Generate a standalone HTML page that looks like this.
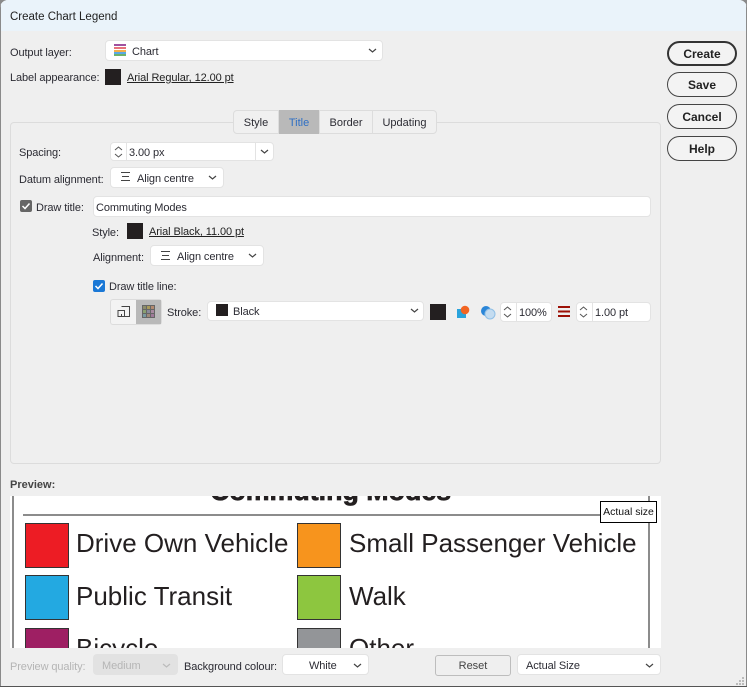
<!DOCTYPE html>
<html><head><meta charset="utf-8"><style>
html,body{margin:0;padding:0;background:#8a8a8a}
#w{position:relative;width:747px;height:687px;overflow:hidden;background:#efefef;font:11px "Liberation Sans",sans-serif;color:#2b2b33;border-radius:8px 8px 0 0}
#w *{box-sizing:border-box}
.a{position:absolute;white-space:nowrap}
.l{position:absolute;white-space:nowrap;line-height:14px;margin-top:1px;letter-spacing:-.1px}
.f{position:absolute;background:#fff;border:1px solid #e3e3e3;border-radius:4px;white-space:nowrap}
.sw{position:absolute;width:16px;height:16px;background:#231f20}
.u{position:absolute;text-decoration:underline;color:#222;white-space:nowrap;line-height:14px;margin-top:1px;letter-spacing:-.1px}
.btn{position:absolute;left:667px;width:70px;height:25px;border:1px solid #444;border-radius:13px;text-align:center;font-weight:bold;font-size:12px;line-height:24px;color:#222;background:#f3f3f3}
.k{position:absolute;width:44px;height:45px;border:1px solid #333}
.t{position:absolute;font-size:26px;line-height:30px;color:#231f20;white-space:nowrap}
svg{position:absolute;overflow:visible}
.tab{position:absolute;top:110px;height:24px;text-align:center;line-height:26px;border-right:1px solid #ddd}
</style></head><body><div id="w">
<div class="a" style="left:0;top:0;width:747px;height:31px;background:#eaf3fa"></div>
<div class="a" style="left:0;top:0;width:1px;height:687px;background:#8a8a8a"></div>
<div class="a" style="left:746px;top:0;width:1px;height:687px;background:#8a8a8a"></div>
<div class="a" style="left:0;top:686px;width:747px;height:1px;background:#555"></div>
<div class="l" style="left:10px;top:9px;font-size:11.5px;color:#222;letter-spacing:0">Create Chart Legend</div>

<div class="l" style="left:10px;top:45px">Output layer:</div>
<div class="f" style="left:105px;top:40px;width:278px;height:21px"></div>
<svg style="left:114px;top:44px" width="12" height="12"><rect x="0" y="0" width="12" height="2" fill="#a0519f"/><rect x="0" y="3" width="12" height="2" fill="#e8737a"/><rect x="0" y="6" width="12" height="2" fill="#f5b04a"/><rect x="0" y="8" width="12" height="2" fill="#5aa9e6"/><rect x="0" y="10" width="12" height="2" fill="#6db36d"/></svg>
<div class="l" style="left:132px;top:44px">Chart</div>
<svg style="left:368px;top:48px" width="9" height="5"><path d="M1 1L4.5 4L8 1" fill="none" stroke="#444" stroke-width="1.2"/></svg>

<div class="l" style="left:10px;top:70px">Label appearance:</div>
<div class="sw" style="left:105px;top:69px"></div>
<div class="u" style="left:127px;top:70px">Arial Regular, 12.00 pt</div>

<div class="a" style="left:10px;top:122px;width:651px;height:342px;border:1px solid #dcdcdc;border-radius:4px"></div>
<div class="a" style="left:233px;top:110px;width:204px;height:24px;background:#f0f0f0;border:1px solid #dcdcdc;border-radius:4px"></div>
<div class="tab" style="left:234px;width:45px">Style</div>
<div class="tab" style="left:279px;width:41px;background:#b9b9b9;color:#2f6fc4">Title</div>
<div class="tab" style="left:320px;width:53px">Border</div>
<div class="tab" style="left:373px;width:63px;border:0">Updating</div>

<div class="l" style="left:19px;top:145px">Spacing:</div>
<div class="f" style="left:110px;top:142px;width:164px;height:19px"></div>
<div class="a" style="left:126px;top:142px;width:1px;height:19px;background:#e3e3e3"></div>
<div class="a" style="left:255px;top:142px;width:1px;height:19px;background:#e3e3e3"></div>
<svg style="left:114px;top:146px" width="9" height="12"><path d="M1 4L4.5 1L8 4M1 8L4.5 11L8 8" fill="none" stroke="#555"/></svg>
<div class="l" style="left:129px;top:145px">3.00 px</div>
<svg style="left:260px;top:149px" width="9" height="5"><path d="M1 1L4.5 4L8 1" fill="none" stroke="#444" stroke-width="1.2"/></svg>

<div class="l" style="left:19px;top:172px">Datum alignment:</div>
<div class="f" style="left:110px;top:167px;width:114px;height:21px"></div>
<svg style="left:120px;top:172px" width="11" height="10"><path d="M1 .5H10M2 4.5H9M1 8.5H10" stroke="#444" fill="none"/></svg>
<div class="l" style="left:137px;top:171px">Align centre</div>
<svg style="left:208px;top:175px" width="9" height="5"><path d="M1 1L4.5 4L8 1" fill="none" stroke="#444" stroke-width="1.2"/></svg>

<div class="a" style="left:20px;top:200px;width:12px;height:12px;background:#666;border-radius:2px"></div>
<svg style="left:20px;top:200px" width="12" height="12"><path d="M2.5 6L5 8.5L9.5 3.5" fill="none" stroke="#fff" stroke-width="1.5"/></svg>
<div class="l" style="left:36px;top:200px">Draw title:</div>
<div class="f" style="left:93px;top:196px;width:558px;height:21px"></div>
<div class="l" style="left:96px;top:200px">Commuting Modes</div>

<div class="l" style="left:92px;top:225px">Style:</div>
<div class="sw" style="left:127px;top:223px"></div>
<div class="u" style="left:149px;top:224px">Arial Black, 11.00 pt</div>
<div class="l" style="left:93px;top:250px">Alignment:</div>
<div class="f" style="left:150px;top:245px;width:114px;height:21px"></div>
<svg style="left:160px;top:251px" width="11" height="10"><path d="M1 .5H10M2 4.5H9M1 8.5H10" stroke="#444" fill="none"/></svg>
<div class="l" style="left:177px;top:249px">Align centre</div>
<svg style="left:248px;top:253px" width="9" height="5"><path d="M1 1L4.5 4L8 1" fill="none" stroke="#444" stroke-width="1.2"/></svg>

<div class="a" style="left:93px;top:280px;width:12px;height:12px;background:#1a78d6;border-radius:2px"></div>
<svg style="left:93px;top:280px" width="12" height="12"><path d="M2.5 6L5 8.5L9.5 3.5" fill="none" stroke="#fff" stroke-width="1.5"/></svg>
<div class="l" style="left:109px;top:279px">Draw title line:</div>

<div class="a" style="left:110px;top:299px;width:52px;height:26px;background:#f3f3f3;border:1px solid #dcdcdc;border-radius:3px"></div>
<div class="a" style="left:136px;top:300px;width:25px;height:24px;background:#b9b9b9"></div>
<svg style="left:117px;top:305px" width="14" height="14"><path d="M4.5 1.5H12.5V11.5H4.5V9M1 5.5H7.5V11.5H1Z" fill="none" stroke="#444"/></svg>
<svg style="left:142px;top:305px" width="13" height="13"><rect width="13" height="13" fill="#666"/><rect x="1" y="1" width="3" height="3" fill="#8c8c6a"/><rect x="5" y="1" width="3" height="3" fill="#a89a5a"/><rect x="9" y="1" width="3" height="3" fill="#b48a70"/><rect x="1" y="5" width="3" height="3" fill="#8aa070"/><rect x="5" y="5" width="3" height="3" fill="#8a8a9a"/><rect x="9" y="5" width="3" height="3" fill="#a88aa0"/><rect x="1" y="9" width="3" height="3" fill="#7a9aa0"/><rect x="5" y="9" width="3" height="3" fill="#a08a7a"/><rect x="9" y="9" width="3" height="3" fill="#a07a9a"/></svg>
<div class="l" style="left:167px;top:305px">Stroke:</div>
<div class="f" style="left:207px;top:301px;width:217px;height:20px"></div>
<div class="a" style="left:216px;top:304px;width:12px;height:12px;background:#231f20"></div>
<div class="l" style="left:233px;top:304px">Black</div>
<svg style="left:410px;top:308px" width="9" height="5"><path d="M1 1L4.5 4L8 1" fill="none" stroke="#444" stroke-width="1.2"/></svg>
<div class="sw" style="left:430px;top:304px"></div>
<svg style="left:456px;top:305px" width="14" height="14"><rect x="1" y="4" width="9" height="9" fill="#29a3dc"/><circle cx="9" cy="5" r="4.3" fill="#f26522"/></svg>
<svg style="left:480px;top:305px" width="16" height="16"><circle cx="6" cy="6" r="5" fill="#2a86d8"/><circle cx="10" cy="9" r="5" fill="#c4dcf0" stroke="#8fbfe6"/></svg>
<div class="f" style="left:500px;top:302px;width:52px;height:20px"></div>
<div class="a" style="left:516px;top:302px;width:1px;height:20px;background:#e3e3e3"></div>
<svg style="left:503px;top:306px" width="9" height="12"><path d="M1 4L4.5 1L8 4M1 8L4.5 11L8 8" fill="none" stroke="#555"/></svg>
<div class="l" style="left:519px;top:305px">100%</div>
<svg style="left:558px;top:306px" width="12" height="11"><path d="M0 1H12M0 5.5H12M0 10H12" stroke="#9c1006" stroke-width="2"/></svg>
<div class="f" style="left:576px;top:302px;width:75px;height:20px"></div>
<div class="a" style="left:592px;top:302px;width:1px;height:20px;background:#e3e3e3"></div>
<svg style="left:579px;top:306px" width="9" height="12"><path d="M1 4L4.5 1L8 4M1 8L4.5 11L8 8" fill="none" stroke="#555"/></svg>
<div class="l" style="left:595px;top:305px">1.00 pt</div>

<div class="btn" style="top:41px;border:2px solid #333;line-height:22px">Create</div>
<div class="btn" style="top:72px">Save</div>
<div class="btn" style="top:104px">Cancel</div>
<div class="btn" style="top:136px">Help</div>

<div class="l" style="left:10px;top:477px;font-weight:bold;color:#444;letter-spacing:0">Preview:</div>
<div class="a" style="left:10px;top:496px;width:651px;height:152px;background:#fff;overflow:hidden">
 <div class="a" style="left:2px;top:0;width:2px;height:152px;background:#8c8c8c"></div>
 <div class="a" style="left:638px;top:0;width:2px;height:152px;background:#8c8c8c"></div>
 <div class="a" style="left:13px;top:18px;width:625px;height:2px;background:#8c8c8c"></div>
 <div class="a" style="left:200px;top:-20px;width:241px;text-align:center;font-size:26.8px;line-height:30px;font-weight:bold;color:#231f20;-webkit-text-stroke:.7px #231f20">Commuting Modes</div>
 <div class="k" style="left:15px;top:27px;background:#ed1c24"></div>
 <div class="k" style="left:15px;top:79px;background:#23a9e1"></div>
 <div class="k" style="left:15px;top:132px;background:#9e1f63"></div>
 <div class="k" style="left:287px;top:27px;background:#f7941d"></div>
 <div class="k" style="left:287px;top:79px;background:#8dc63f"></div>
 <div class="k" style="left:287px;top:132px;background:#939598"></div>
 <div class="t" style="left:66px;top:32px">Drive Own Vehicle</div>
 <div class="t" style="left:66px;top:85px">Public Transit</div>
 <div class="t" style="left:66px;top:137px">Bicycle</div>
 <div class="t" style="left:339px;top:32px">Small Passenger Vehicle</div>
 <div class="t" style="left:339px;top:85px">Walk</div>
 <div class="t" style="left:339px;top:137px">Other</div>
 <div class="a" style="left:590px;top:5px;width:57px;height:22px;background:#fff;border:1px solid #000;text-align:center;line-height:20px;font-size:10.5px;color:#111">Actual size</div>
</div>

<div class="l" style="left:10px;top:659px;color:#b5b5b5">Preview quality:</div>
<div class="a" style="left:93px;top:654px;width:85px;height:21px;background:#e2e2e2;border-radius:4px"></div>
<div class="l" style="left:102px;top:658px;color:#b5b5b5">Medium</div>
<svg style="left:162px;top:663px" width="9" height="5"><path d="M1 1L4.5 4L8 1" fill="none" stroke="#bbb" stroke-width="1.2"/></svg>
<div class="l" style="left:184px;top:659px">Background colour:</div>
<div class="f" style="left:282px;top:654px;width:87px;height:21px"></div>
<div class="l" style="left:309px;top:658px">White</div>
<svg style="left:353px;top:663px" width="9" height="5"><path d="M1 1L4.5 4L8 1" fill="none" stroke="#444" stroke-width="1.2"/></svg>
<div class="a" style="left:435px;top:655px;width:76px;height:21px;background:#efefef;border:1px solid #bdbdbd;border-radius:3px;text-align:center;line-height:21px;color:#444">Reset</div>
<div class="f" style="left:517px;top:654px;width:144px;height:21px"></div>
<div class="l" style="left:526px;top:658px">Actual Size</div>
<svg style="left:645px;top:663px" width="9" height="5"><path d="M1 1L4.5 4L8 1" fill="none" stroke="#444" stroke-width="1.2"/></svg>
<svg style="left:735px;top:676px" width="10" height="10" fill="#bbb"><rect x="7" y="1" width="2" height="2"/><rect x="4" y="4" width="2" height="2"/><rect x="7" y="4" width="2" height="2"/><rect x="1" y="7" width="2" height="2"/><rect x="4" y="7" width="2" height="2"/><rect x="7" y="7" width="2" height="2"/></svg>
</div></body></html>
